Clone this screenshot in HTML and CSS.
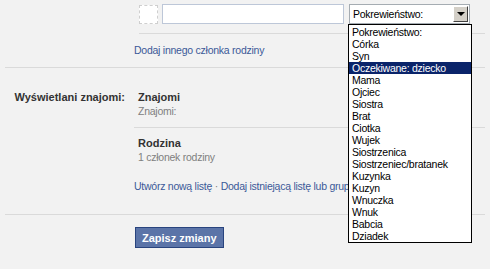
FILE: index.html
```html
<!DOCTYPE html>
<html lang="pl">
<head>
    <meta charset="UTF-8">
    <title>Rodzina</title>
    <link rel="stylesheet" href="styles.css">
</head>
<body>

    <div class="page">

        <!-- Family member row -->
        <div class="row section">
            <div class="label"></div>
            <div class="field">
                <div class="member-inputs">
                    <span class="photo"></span>
                    <input type="text" class="name-input">
                    <div class="select-box">
                        <span class="select-text">Pokrewieństwo:</span>
                        <span class="select-arrow"></span>
                    </div>
                </div>
                <div class="add-link"><a href="#">Dodaj innego członka rodziny</a></div>
            </div>
        </div>

        <!-- Lists -->
        <div class="row section">
            <div class="label friends-label">Wyświetlani znajomi:</div>
            <div class="field">
                <div class="list-item first">
                    <div class="list-name">Znajomi</div>
                    <div class="list-info">Znajomi:</div>
                </div>
                <div class="list-item">
                    <div class="list-name">Rodzina</div>
                    <div class="list-info">1 członek rodziny</div>
                </div>
                <div class="list-links">
                    <a href="#">Utwórz nową listę</a> <span class="dot">·</span> <a href="#">Dodaj istniejącą listę lub grupę</a>
                </div>
            </div>
        </div>

        <!-- Save -->
        <div class="row">
            <div class="label"></div>
            <div class="field actions">
                <button class="save">Zapisz zmiany</button>
            </div>
        </div>

        <!-- Open relationship menu -->
        <ul class="dropdown">
            <li>Pokrewieństwo:</li>
            <li>Córka</li>
            <li>Syn</li>
            <li class="selected">Oczekiwane: dziecko</li>
            <li>Mama</li>
            <li>Ojciec</li>
            <li>Siostra</li>
            <li>Brat</li>
            <li>Ciotka</li>
            <li>Wujek</li>
            <li>Siostrzenica</li>
            <li>Siostrzeniec/bratanek</li>
            <li>Kuzynka</li>
            <li>Kuzyn</li>
            <li>Wnuczka</li>
            <li>Wnuk</li>
            <li>Babcia</li>
            <li>Dziadek</li>
        </ul>

    </div>

</body>
</html>
```

FILE: styles.css
```css
/* Page */
body {
    margin: 0;
    background: #f2f2f2;
    font-family: 'Liberation Sans', Arial, sans-serif;
    font-size: 10.5px;
    letter-spacing: -0.25px;
    line-height: 14px;
    color: #333333;
    overflow: hidden;
}

a {
    color: #3b5998;
    text-decoration: none;
}

.page {
    position: relative;
    padding: 0 5px;
    height: 269px;
}

.row {
    display: flex;
}

.section {
    border-bottom: 1px solid #dadada;
}

.label {
    width: 120px;
    padding-right: 9px;
    text-align: right;
    flex-shrink: 0;
}

.field {
    flex: 1;
}

/* Family member inputs */
.member-inputs {
    display: flex;
    align-items: center;
    gap: 4px;
    padding-top: 4px;
    padding-bottom: 9px;
    margin-left: 5px;
    border-bottom: 1px solid #dadada;
}

.photo {
    width: 17px;
    height: 17px;
    border: 1px dashed #cfcfcf;
    background: #ffffff;
}

.name-input {
    width: 178px;
    height: 16px;
    margin: 0;
    padding: 1px;
    border: 1px solid #bdc7d8;
    background: #ffffff;
}

.select-box {
    display: flex;
    align-items: center;
    justify-content: space-between;
    width: 119px;
    height: 18px;
    margin-left: 1px;
    border: 1px solid #a5acb2;
    background: #ffffff;
}

.select-text {
    padding-left: 3px;
    color: #000000;
}

.select-arrow {
    position: relative;
    width: 15px;
    height: 16px;
    margin-right: 1px;
    background: #d4d0c8;
    border-top: 1px solid #ffffff;
    border-left: 1px solid #ffffff;
    border-right: 1px solid #404040;
    border-bottom: 1px solid #404040;
    box-sizing: border-box;
}

.select-arrow::after {
    content: "";
    position: absolute;
    left: 3px;
    top: 5px;
    border-left: 4px solid transparent;
    border-right: 4px solid transparent;
    border-top: 4px solid #000000;
}

.add-link {
    margin-top: 9px;
    padding-bottom: 10px;
}

/* Friend lists */
.friends-label {
    padding-top: 22px;
    font-size: 11px;
    letter-spacing: 0;
    font-weight: bold;
    color: #333333;
}

.list-item {
    padding: 8px 0 9px 4px;
    border-bottom: 1px solid #dadada;
}

.list-item.first {
    padding-top: 22px;
}

.list-item:nth-child(2) {
    border-bottom: none;
    padding-bottom: 0;
}

.list-name {
    font-size: 11px;
    letter-spacing: 0;
    font-weight: bold;
    color: #333333;
}

.list-info {
    color: #808080;
}

.list-links {
    width: 214px;
    margin-top: 15px;
    padding-bottom: 21px;
    white-space: nowrap;
    overflow: hidden;
}

.dot {
    color: #808080;
}

/* Save button */
.actions {
    padding-top: 12px;
}

.save {
    height: 21px;
    margin-left: 1px;
    padding: 0 6px;
    border: 1px solid #29447e;
    background: #5b74a8;
    color: #ffffff;
    font-family: 'Liberation Sans', Arial, sans-serif;
    font-size: 11px;
    font-weight: bold;
}

/* Open select menu */
.dropdown {
    position: absolute;
    left: 348px;
    top: 24px;
    width: 122px;
    margin: 0;
    padding: 1px 0 0 0;
    list-style: none;
    border: 1px solid #000000;
    background: #ffffff;
}

.dropdown li {
    height: 12px;
    line-height: 12px;
    padding-left: 3px;
    color: #000000;
}

.dropdown li.selected {
    background: #0a246a;
    color: #ffffff;
}
```
